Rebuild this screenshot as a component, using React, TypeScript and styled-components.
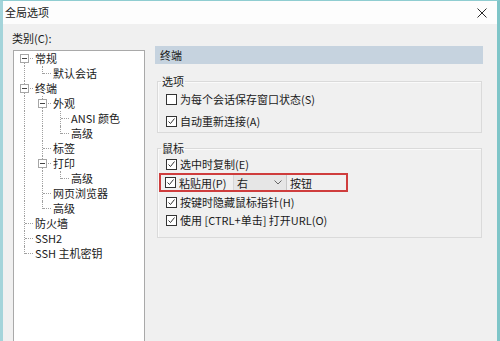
import React from 'react';
import styled, { createGlobalStyle } from 'styled-components';

const GlobalStyle = createGlobalStyle`
  html,
  body {
    margin: 0;
    padding: 0;
    background: #f0f0f0;
  }

  body {
    font-family: "Noto Sans CJK SC", "Noto Sans", sans-serif;
    font-size: 11px;
    color: #1a1a1a;
  }
`;

const Window = styled.div`
  width: 500px;
  height: 341px;
  box-sizing: border-box;
  display: flex;
  flex-direction: column;
  overflow: hidden;
  background: #f0f0f0;
  border-top: 1px solid #8fcdd1;
  border-left: 3px solid #a4d4da;
  border-right: 3px solid #7fc5c8;
`;

const TitleBar = styled.div`
  height: 23px;
  flex-shrink: 0;
  display: flex;
  align-items: center;
  justify-content: space-between;
  padding-left: 2px;
  background: #fdfdfd;
`;

const Title = styled.span`
  line-height: 23px;
`;

const CloseButton = styled.div`
  width: 30px;
  height: 23px;
  display: flex;
  align-items: center;
  justify-content: center;
  color: #2a2a2a;
`;

const Body = styled.div`
  flex: 1;
  min-height: 0;
  display: flex;
  gap: 10px;
  padding-left: 10px;
`;

const LeftColumn = styled.div`
  width: 132px;
  flex-shrink: 0;
  display: flex;
  flex-direction: column;
`;

const CategoryLabel = styled.div`
  margin: 7px 0 0 -1px;
  line-height: 15px;
`;

const Tree = styled.div`
  margin-top: 4px;
  height: 300px;
  flex-shrink: 0;
  box-sizing: border-box;
  border: 1px solid #a9a9a9;
  background: #fff;
  padding-left: 2px;
`;

const TreeRow = styled.div`
  display: flex;
  height: 15px;
`;

type Vertical = 'full' | 'top' | 'bottom' | 'none';

const Guide = styled.span<{ $vertical: Vertical; $branch?: boolean }>`
  position: relative;
  width: 18px;
  height: 15px;
  flex-shrink: 0;

  &::before {
    content: ${p => (p.$vertical === 'none' ? 'none' : "''")};
    position: absolute;
    left: 8px;
    top: ${p => (p.$vertical === 'bottom' ? 7 : 0)}px;
    height: ${p => (p.$vertical === 'full' ? 15 : 8)}px;
    border-left: 1px dotted #a0a0a0;
  }

  &::after {
    content: ${p => (p.$branch ? "''" : 'none')};
    position: absolute;
    left: 9px;
    top: 7px;
    width: 8px;
    border-top: 1px dotted #a0a0a0;
  }
`;

const Toggle = styled.span`
  position: absolute;
  left: 4px;
  top: 3px;
  width: 9px;
  height: 9px;
  box-sizing: border-box;
  border: 1px solid #a6a6a6;
  background: #fff;
  z-index: 1;

  &::after {
    content: '';
    position: absolute;
    left: 1px;
    top: 3px;
    width: 5px;
    height: 1px;
    background: #444;
  }
`;

const TreeLabel = styled.span`
  padding-left: 1px;
  line-height: 15px;
  white-space: nowrap;
`;

const RightColumn = styled.div`
  width: 328px;
  flex-shrink: 0;
  margin-top: 22px;
`;

const PageHeader = styled.div`
  height: 18px;
  line-height: 18px;
  padding-left: 5px;
  background: #c6d3df;
`;

const Group = styled.fieldset<{ $top: number; $bottom: number }>`
  margin: ${p => p.$top}px 1px 0 2px;
  padding: 0 8px ${p => p.$bottom}px;
  min-width: 0;
  border: 1px solid #dadada;
  box-shadow: inset 1px 1px 0 #fafafa;
`;

const Legend = styled.legend`
  padding: 0 1px;
  margin-left: -5px;
  line-height: 14px;
`;

const Row = styled.div<{ $height: number; $gap?: number }>`
  display: flex;
  align-items: center;
  height: ${p => p.$height}px;
  margin-top: ${p => p.$gap ?? 0}px;
  white-space: nowrap;
`;

const HighlightRow = styled(Row)`
  box-sizing: border-box;
  width: 189px;
  margin-left: -7px;
  padding-left: 4px;
  align-items: stretch;
  border: 2px solid #cf3d3d;
`;

const Box = styled.span`
  width: 11px;
  height: 11px;
  box-sizing: border-box;
  flex-shrink: 0;
  border: 1px solid #333;
  background: #fff;
  margin-right: 3px;
  display: flex;
  align-items: center;
  justify-content: center;
`;

const BoxCell = styled.span`
  display: flex;
  align-items: center;
`;

const PasteLabel = styled.span`
  width: 54px;
  display: flex;
  align-items: center;
`;

const Select = styled.span`
  width: 54px;
  box-sizing: border-box;
  display: flex;
  align-items: center;
  justify-content: space-between;
  padding: 0 4px 0 3px;
  background: #e6e6e6;
  border-left: 1px solid #d6d6d6;
  border-right: 1px solid #c8c8c8;
`;

const Suffix = styled.span`
  display: flex;
  align-items: center;
  padding-left: 3px;
`;

type TreeNode = { label: string; children?: TreeNode[] };

type FlatRow = {
  label: string;
  vertical: Vertical;
  hasChildren: boolean;
  trail: boolean[];
};

const categories: TreeNode[] = [
  { label: '常规', children: [{ label: '默认会话' }] },
  {
    label: '终端',
    children: [
      { label: '外观', children: [{ label: 'ANSI 颜色' }, { label: '高级' }] },
      { label: '标签' },
      { label: '打印', children: [{ label: '高级' }] },
      { label: '网页浏览器' },
      { label: '高级' },
    ],
  },
  { label: '防火墙' },
  { label: 'SSH2' },
  { label: 'SSH 主机密钥' },
];

function flatten(nodes: TreeNode[], depth = 0, trail: boolean[] = []): FlatRow[] {
  return nodes.flatMap((node, index) => {
    const isLast = index === nodes.length - 1;
    const isFirstRoot = depth === 0 && index === 0;
    let vertical: Vertical = 'full';
    if (isFirstRoot) vertical = isLast ? 'none' : 'bottom';
    else if (isLast) vertical = 'top';

    const row: FlatRow = {
      label: node.label,
      vertical,
      hasChildren: !!node.children,
      trail,
    };
    const children = node.children
      ? flatten(node.children, depth + 1, [...trail, !isLast])
      : [];
    return [row, ...children];
  });
}

const rows = flatten(categories);

const CheckMark = () => (
  <svg width="9" height="9" viewBox="0 0 9 9">
    <path d="M1.5 4.5 L3.5 6.5 L7.5 1.5" fill="none" stroke="#333" strokeWidth="1" />
  </svg>
);

const Checkbox: React.FC<{ checked?: boolean }> = ({ checked }) => (
  <Box>{checked && <CheckMark />}</Box>
);

const Option: React.FC<{ label: string; checked?: boolean; height: number; gap?: number }> = props => (
  <Row $height={props.height} $gap={props.gap}>
    <Checkbox checked={props.checked} />
    {props.label}
  </Row>
);

export default function App() {
  return (
    <>
      <GlobalStyle />
      <Window>
        <TitleBar>
          <Title>全局选项</Title>
          <CloseButton>
            <svg width="10" height="10" viewBox="0 0 10 10">
              <path d="M0.5 0.5 L9.5 9.5 M9.5 0.5 L0.5 9.5" stroke="currentColor" strokeWidth="1" />
            </svg>
          </CloseButton>
        </TitleBar>
        <Body>
          <LeftColumn>
            <CategoryLabel>类别(C):</CategoryLabel>
            <Tree>
              {rows.map((row, i) => (
                <TreeRow key={i}>
                  {row.trail.map((continues, level) => (
                    <Guide key={level} $vertical={continues ? 'full' : 'none'} />
                  ))}
                  <Guide $vertical={row.vertical} $branch>
                    {row.hasChildren && <Toggle />}
                  </Guide>
                  <TreeLabel>{row.label}</TreeLabel>
                </TreeRow>
              ))}
            </Tree>
          </LeftColumn>
          <RightColumn>
            <PageHeader>终端</PageHeader>
            <Group $top={10} $bottom={0}>
              <Legend>选项</Legend>
              <Option height={22} label="为每个会话保存窗口状态(S)" />
              <Option height={22} label="自动重新连接(A)" checked />
            </Group>
            <Group $top={8} $bottom={8}>
              <Legend>鼠标</Legend>
              <Option height={18} label="选中时复制(E)" checked />
              <HighlightRow $height={19}>
                <BoxCell>
                  <Checkbox checked />
                </BoxCell>
                <PasteLabel>粘贴用(P)</PasteLabel>
                <Select>
                  <span>右</span>
                  <svg width="8" height="5" viewBox="0 0 8 5">
                    <path d="M0.5 0.5 L4 4 L7.5 0.5" fill="none" stroke="#666" strokeWidth="1" />
                  </svg>
                </Select>
                <Suffix>按钮</Suffix>
              </HighlightRow>
              <Option height={18} gap={1} label="按键时隐藏鼠标指针(H)" checked />
              <Option height={18} label="使用 [CTRL+单击] 打开URL(O)" checked />
            </Group>
          </RightColumn>
        </Body>
      </Window>
    </>
  );
}
